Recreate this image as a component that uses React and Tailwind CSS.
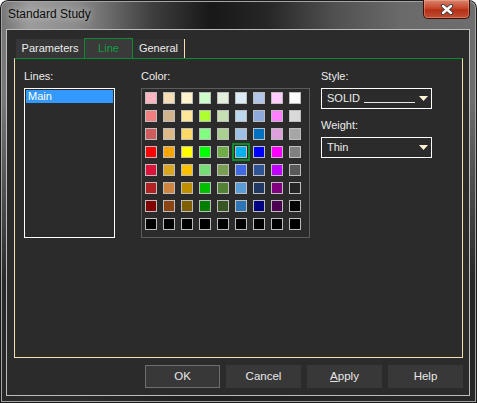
import React from "react";

const palette = [
  ["#ffb6c1", "#f5deb3", "#fff2cc", "#ccffcc", "#e2efda", "#ddebf7", "#b4c6e7", "#ffccff", "#ffffff"],
  ["#f08080", "#d2b48c", "#ffe699", "#adff2f", "#c6e0b4", "#bdd7ee", "#8ea9db", "#ff80ff", "#d9d9d9"],
  ["#cd5c5c", "#deb887", "#ffd966", "#80ff80", "#a9d08e", "#9bc2e6", "#0070c0", "#dda0dd", "#a6a6a6"],
  ["#ff0000", "#ffa500", "#ffff00", "#00ff00", "#70ad47", "#00b0f0", "#0000ff", "#ff00ff", "#808080"],
  ["#dc143c", "#daa520", "#ffc000", "#77dd77", "#7a9e54", "#4169e1", "#2f5597", "#bf00ff", "#595959"],
  ["#b22222", "#cd853f", "#bf8f00", "#00c000", "#548235", "#5b9bd5", "#1f3864", "#800080", "#262626"],
  ["#800000", "#8b4513", "#7f6000", "#008000", "#375623", "#2e75b6", "#000080", "#4b0050", "#000000"],
  ["#000000", "#000000", "#000000", "#000000", "#000000", "#000000", "#000000", "#000000", "#000000"],
];

const Arrow = () => (
  <svg width="9" height="5" viewBox="0 0 9 5">
    <polygon points="0,0 9,0 4.5,5" fill="#fff4d6" />
  </svg>
);

const Select = ({ children }) => (
  <div className="flex h-[21px] w-[111px] items-center justify-between border border-white pl-[5px] pr-[3px]">
    <div className="flex items-end leading-[13px]">{children}</div>
    <Arrow />
  </div>
);

const Button = ({ children, active }) => (
  <div
    className={
      active
        ? "flex h-[23px] w-[75px] items-center justify-center border border-[#6e6e6e] bg-[#383838] text-[11.5px] text-[#e8e8e8]"
        : "flex h-[23px] w-[75px] items-center justify-center bg-[#383838] text-[11.5px] text-[#e8e8e8]"
    }
  >
    {children}
  </div>
);

export default function App() {
  return (
    <div className="flex h-[403px] w-[477px] flex-col rounded-t-[8px] bg-[linear-gradient(180deg,rgba(0,0,0,0)_0%,rgba(0,0,0,0)_25%,rgba(32,32,32,0.9)_70%),linear-gradient(90deg,#727272_0%,#9c9c9c_6%,#8c8c8c_16%,#3e3e3e_32%,#181818_44%,#262626_56%,#505050_70%,#6a6a6a_84%,#6e6e6e_100%)] font-['Liberation_Sans',Arial,sans-serif] shadow-[inset_0_0_0_1px_#1a1a1a,inset_0_0_0_2px_#a4a4a4]">
      {/* title bar */}
      <div className="flex h-[29px] items-start justify-between">
        <div className="pl-[8px] pt-[7px] text-[12px] leading-[14px] text-[#0c0c0c] [text-shadow:0_0_6px_#d8d8d8]">
          Standard Study
        </div>
        <div className="mr-[7px] flex h-[19px] w-[47px] items-center justify-center rounded-b-[5px] border border-t-0 border-[#3c1008] bg-[linear-gradient(180deg,#d8846e_0%,#c8482c_45%,#b33016_55%,#c24e36_100%)] shadow-[inset_0_0_0_1px_rgba(255,200,180,0.35)]">
          <svg width="14" height="11" viewBox="0 0 14 11">
            <path d="M3 2 L11 9 M11 2 L3 9" stroke="#3a3a3a" strokeWidth="4.2" strokeLinecap="round" />
            <path d="M3 2 L11 9 M11 2 L3 9" stroke="#ffffff" strokeWidth="2.4" strokeLinecap="round" />
          </svg>
        </div>
      </div>

      {/* client area */}
      <div className="ml-[6px] mr-[7px] h-[367px] border border-[#bcbcbc] bg-[#2b2b2b] pl-[7px] pr-[6px] pt-[8px] text-[11px] text-[#ececec]">
        {/* tabs */}
        <div className="flex h-[20px] items-end pl-[2px]">
          <div className="flex h-[19px] w-[68px] items-center justify-center bg-[#363636]">Parameters</div>
          <div className="flex h-[20px] w-[49px] items-center justify-center border border-b-0 border-[#0b8c2c] bg-[#3a3a3a] pb-[1px] text-[#10a040]">
            Line
          </div>
          <div className="flex h-[19px] w-[52px] items-center justify-center border-r border-[#f3e2b0] bg-[#303030]">
            General
          </div>
        </div>

        {/* panel */}
        <div className="h-[300px] border border-[#f3e2b0] border-t-[#0b8c2c] pl-[9px] pt-[11px]">
          <div className="flex">
            <div className="w-[91px]">
              <div className="mb-[5px] h-[13px] leading-[13px]">Lines:</div>
              <div className="h-[150px] border border-white p-[1px]">
                <div className="h-[13px] bg-[#3399ff] pl-[2px] leading-[13px] text-white">Main</div>
              </div>
            </div>

            <div className="ml-[26px] w-[169px]">
              <div className="mb-[5px] h-[13px] leading-[13px]">Color:</div>
              <div className="h-[150px] border border-[#5c5c5c] pl-[3px] pt-[3px]">
                <div className="grid grid-cols-[repeat(9,12px)] gap-[6px]">
                  {palette.map((row, r) =>
                    row.map((c, i) => (
                      <div
                        key={r + "-" + i}
                        className={
                          r === 3 && i === 5
                            ? "h-[12px] w-[12px] border border-[#bdbdbd] outline-2 outline-offset-1 outline-solid outline-[#0b8c2c]"
                            : "h-[12px] w-[12px] border border-[#bdbdbd]"
                        }
                        style={{ backgroundColor: c }}
                      />
                    ))
                  )}
                </div>
              </div>
            </div>

            <div className="ml-[11px] w-[111px]">
              <div className="mb-[5px] h-[13px] leading-[13px]">Style:</div>
              <Select>
                <span>SOLID</span>
                <span className="mb-[2px] ml-[4px] h-px w-[51px] bg-[#e8e8e8]" />
              </Select>
              <div className="mb-[5px] mt-[10px] h-[13px] leading-[13px]">Weight:</div>
              <Select>
                <span>Thin</span>
              </Select>
            </div>
          </div>
        </div>

        {/* buttons */}
        <div className="mt-[7px] flex justify-end gap-[6px]">
          <Button active>OK</Button>
          <Button>Cancel</Button>
          <Button>
            <span>
              <span className="underline">A</span>pply
            </span>
          </Button>
          <Button>Help</Button>
        </div>
      </div>
    </div>
  );
}
